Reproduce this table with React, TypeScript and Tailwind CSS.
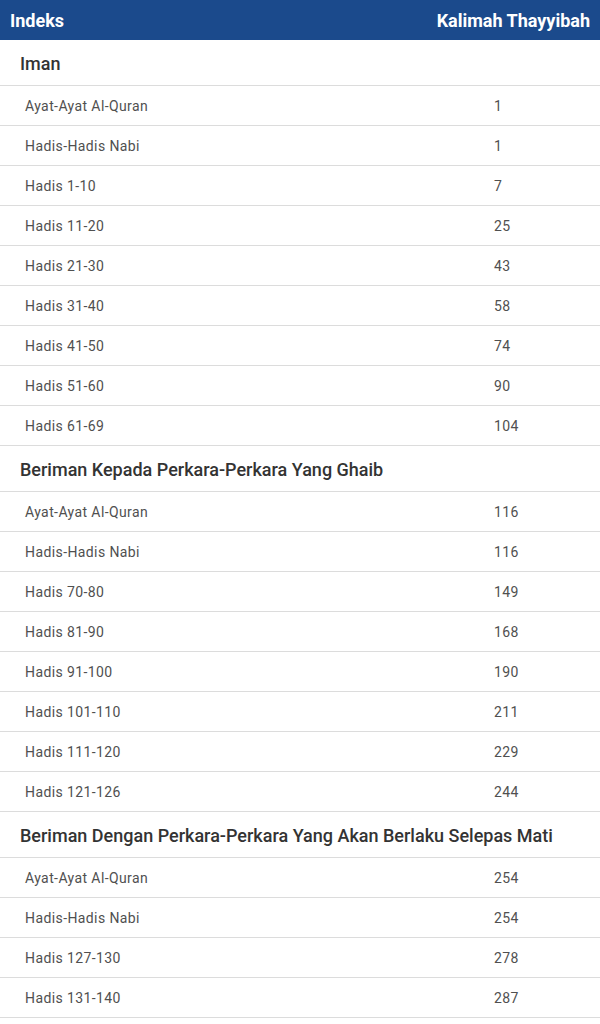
const sections = [
  {
    title: "Iman",
    rows: [
      ["Ayat-Ayat Al-Quran", "1"],
      ["Hadis-Hadis Nabi", "1"],
      ["Hadis 1-10", "7"],
      ["Hadis 11-20", "25"],
      ["Hadis 21-30", "43"],
      ["Hadis 31-40", "58"],
      ["Hadis 41-50", "74"],
      ["Hadis 51-60", "90"],
      ["Hadis 61-69", "104"],
    ],
  },
  {
    title: "Beriman Kepada Perkara-Perkara Yang Ghaib",
    rows: [
      ["Ayat-Ayat Al-Quran", "116"],
      ["Hadis-Hadis Nabi", "116"],
      ["Hadis 70-80", "149"],
      ["Hadis 81-90", "168"],
      ["Hadis 91-100", "190"],
      ["Hadis 101-110", "211"],
      ["Hadis 111-120", "229"],
      ["Hadis 121-126", "244"],
    ],
  },
  {
    title: "Beriman Dengan Perkara-Perkara Yang Akan Berlaku Selepas Mati",
    rows: [
      ["Ayat-Ayat Al-Quran", "254"],
      ["Hadis-Hadis Nabi", "254"],
      ["Hadis 127-130", "278"],
      ["Hadis 131-140", "287"],
    ],
  },
];

export default function App() {
  return (
    <div className="w-[600px] bg-white font-['Roboto',sans-serif]">
      <div className="h-10 bg-[#1b4a8c] flex items-center justify-between px-[10px] text-white text-[18px] font-bold">
        <span>Indeks</span>
        <span>Kalimah Thayyibah</span>
      </div>

      {sections.map((s) => (
        <div key={s.title}>
          <div className="h-[46px] border-b border-[#dcdcdc] flex items-center pl-5 pt-[2px] text-[18px] font-medium text-[#333]">
            {s.title}
          </div>
          {s.rows.map(([label, page]) => (
            <div
              key={label + page}
              className="h-10 border-b border-[#dcdcdc] flex items-center pt-[2px] text-[14px] text-[#505050] tracking-[0.4px]"
            >
              <span className="w-[494px] pl-[25px]">{label}</span>
              <span>{page}</span>
            </div>
          ))}
        </div>
      ))}
    </div>
  );
}
